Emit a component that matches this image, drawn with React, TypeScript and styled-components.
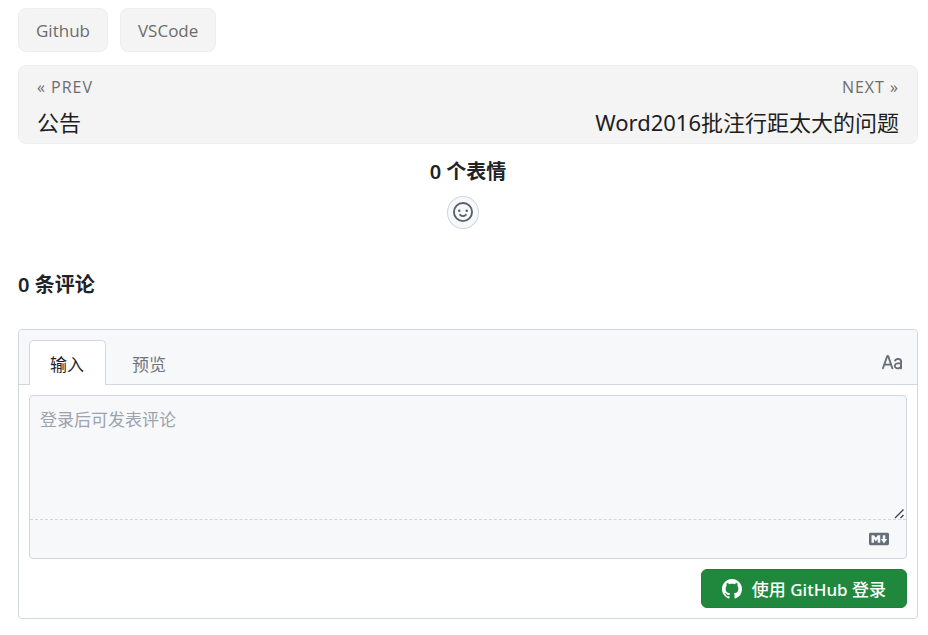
import React from "react";
import styled, { createGlobalStyle } from "styled-components";

const GlobalStyle = createGlobalStyle`
  *, *::before, *::after { box-sizing: border-box; }
  body {
    margin: 0;
    background: #fff;
    color: #1f2328;
    font-family: "Noto Sans", "Noto Sans CJK SC", sans-serif;
  }
  button, textarea { font: inherit; }
`;

const Page = styled.main`
  padding: 8px 10px 16px 18px;
`;

const TagList = styled.nav`
  display: flex;
  gap: 12px;
`;

const Tag = styled.a`
  height: 44px;
  padding: 0 17px;
  border: 1px solid #eee;
  border-radius: 8px;
  background: #f4f4f4;
  color: #6c6c6c;
  font-family: "Open Sans", sans-serif;
  font-size: 17px;
  line-height: 43px;
  text-decoration: none;
`;

const PostNav = styled.nav`
  display: flex;
  justify-content: space-between;
  margin-top: 13px;
  border: 1px solid #eee;
  border-radius: 8px;
  background: #f4f4f4;
`;

const PostLink = styled.a<{ $align: "left" | "right" }>`
  padding: 8px 18px 0;
  color: #1e1e1e;
  text-align: ${(p) => p.$align};
  text-decoration: none;
`;

const PostLabel = styled.span`
  display: block;
  color: #6c6c6c;
  font-family: "Open Sans", sans-serif;
  font-size: 16px;
  line-height: 26px;
  letter-spacing: 1px;
`;

const PostTitle = styled.span`
  display: block;
  padding-top: 1px;
  font-size: 22px;
  line-height: 42px;
`;

const Reactions = styled.section`
  display: flex;
  flex-direction: column;
  align-items: center;
`;

const Heading = styled.h2`
  margin: 0;
  font-size: 20px;
  font-weight: 600;
  line-height: 30px;
`;

const ReactionHeading = styled(Heading)`
  margin-top: 13px;
`;

const ReactionButton = styled.button`
  display: flex;
  align-items: center;
  justify-content: center;
  width: 32px;
  height: 33px;
  margin: 9px 10px 0 0;
  padding: 0 0 1px;
  border: 1px solid #d0d7de;
  border-radius: 50%;
  background: #f6f8fa;
  color: #57606a;
`;

const CommentHeading = styled(Heading)`
  margin-top: 41px;
`;

const Editor = styled.form`
  margin-top: 29px;
  border: 1px solid #d0d7de;
  border-radius: 4px;
`;

const EditorHeader = styled.div`
  display: flex;
  align-items: center;
  justify-content: space-between;
  height: 55px;
  padding: 10px 15px 0 10px;
  border-bottom: 1px solid #d0d7de;
  border-radius: 4px 4px 0 0;
  background: #f6f8fa;
`;

const Tabs = styled.div`
  display: flex;
  align-self: stretch;
  margin-bottom: -1px;
`;

const Tab = styled.button<{ $active?: boolean }>`
  padding: 1px 21px 0 20px;
  border: 1px solid ${(p) => (p.$active ? "#d0d7de" : "transparent")};
  border-bottom: 0;
  border-radius: 5px 5px 0 0;
  background: ${(p) => (p.$active ? "#fff" : "transparent")};
  color: ${(p) => (p.$active ? "#1f2328" : "#6e7781")};
  font-size: 17px;
  margin-right: 5px;
  white-space: nowrap;
`;

const IconButton = styled.button`
  display: flex;
  padding: 2px 0 0;
  border: 0;
  background: none;
  color: #656d76;
`;

const EditorBody = styled.div`
  padding: 10px;
`;

const InputFrame = styled.div`
  border: 1px solid #d0d7de;
  border-radius: 4px;
  background: #f6f8fa;
`;

const resizeGrip = `url("data:image/svg+xml,%3Csvg xmlns='http://www.w3.org/2000/svg' width='15' height='15'%3E%3Cpath d='M4 14l8.5-8.5M9.5 14l3-3' stroke='%23444' stroke-width='1.4' fill='none'/%3E%3C/svg%3E")`;

const CommentInput = styled.textarea`
  display: block;
  width: 100%;
  height: 124px;
  padding: 11px 10px;
  border: 0;
  border-bottom: 1px dashed #d0d7de;
  outline: 0;
  background: transparent;
  font-size: 17px;
  line-height: 26px;
  resize: vertical;
  &::placeholder { color: #9ca3af; opacity: 1; }
  &::-webkit-resizer { background: ${resizeGrip} right bottom no-repeat; }
`;

const InputFooter = styled.div`
  display: flex;
  align-items: center;
  justify-content: flex-end;
  height: 38px;
  padding: 0 17px;
`;

const MarkdownLink = styled.a`
  display: flex;
  color: #656d76;
`;

const Actions = styled.div`
  display: flex;
  justify-content: flex-end;
  margin-top: 10px;
`;

const LoginLink = styled.a`
  display: flex;
  align-items: center;
  gap: 10px;
  height: 39px;
  padding: 0 20px;
  border: 1px solid #1f7f3a;
  border-radius: 6px;
  background: #1f883d;
  color: #fff;
  font-size: 17px;
  font-weight: 500;
  text-decoration: none;
  white-space: nowrap;
`;

const paths = {
  smiley:
    "M8 0a8 8 0 1 1 0 16A8 8 0 0 1 8 0ZM1.5 8a6.5 6.5 0 1 0 13 0 6.5 6.5 0 0 0-13 0Zm3.82 1.636a.75.75 0 0 1 1.038.175l.007.009c.103.118.22.222.35.31.264.178.683.37 1.285.37.602 0 1.02-.192 1.285-.371.13-.088.247-.192.35-.31l.007-.008a.75.75 0 0 1 1.222.87l-.022-.015c.02.013.021.015.021.015v.001l-.001.002-.002.003-.005.007-.014.019a2.066 2.066 0 0 1-.184.213c-.16.166-.338.316-.53.445-.63.418-1.37.638-2.127.629-.946 0-1.652-.308-2.126-.63a3.331 3.331 0 0 1-.715-.657l-.014-.02-.005-.006-.002-.003v-.002h-.001l.613-.432-.614.43a.75.75 0 0 1 .183-1.044ZM12 7a1 1 0 1 1-2 0 1 1 0 0 1 2 0ZM5 8a1 1 0 1 1 0-2 1 1 0 0 1 0 2Zm5.25 2.25.592.416a97.71 97.71 0 0 0-.592-.416Z",
  typography:
    "M6.71 10H2.332l-.874 2.498a.75.75 0 0 1-1.415-.496l3.39-9.688a1.217 1.217 0 0 1 2.302.018l3.227 9.681a.75.75 0 0 1-1.423.474Zm3.13-4.358C10.53 4.374 11.87 4 13 4c1.5 0 3 .939 3 2.601v5.649a.75.75 0 0 1-1.448.275C13.995 12.82 13.3 13 12.5 13c-.77 0-1.514-.231-2.078-.709-.577-.488-.922-1.199-.922-2.041 0-.694.265-1.411.887-1.944C11 7.78 11.88 7.5 13 7.5h1.5v-.899c0-.54-.5-1.101-1.5-1.101-.869 0-1.528.282-1.84.858a.75.75 0 1 1-1.32-.716ZM6.21 8.5 4.574 3.594 2.857 8.5Zm8.29.5H13c-.881 0-1.375.22-1.637.444-.253.217-.363.5-.363.806 0 .408.155.697.39.896.249.21.63.354 1.11.354.732 0 1.26-.209 1.588-.449.35-.257.412-.495.412-.551Z",
  markdown:
    "M14.85 3c.63 0 1.15.52 1.14 1.15v7.7c0 .63-.51 1.15-1.15 1.15H1.15C.52 13 0 12.48 0 11.84V4.15C0 3.52.52 3 1.15 3ZM9 11V5H7L5.5 7 4 5H2v6h2V8l1.5 1.92L7 8v3Zm2.99.5L14.5 8H13V5h-2v3H9.5Z",
  github:
    "M8 0C3.58 0 0 3.58 0 8c0 3.54 2.29 6.53 5.47 7.59.4.07.55-.17.55-.38 0-.19-.01-.82-.01-1.49-2.01.37-2.53-.49-2.69-.94-.09-.23-.48-.94-.82-1.13-.28-.15-.68-.52-.01-.53.63-.01 1.08.58 1.23.82.72 1.21 1.87.87 2.33.66.07-.52.28-.87.51-1.07-1.78-.2-3.64-.89-3.64-3.95 0-.87.31-1.59.82-2.15-.08-.2-.36-1.02.08-2.12 0 0 .67-.21 2.2.82.64-.18 1.32-.27 2-.27s1.36.09 2 .27c1.53-1.04 2.2-.82 2.2-.82.44 1.1.16 1.92.08 2.12.51.56.82 1.27.82 2.15 0 3.07-1.87 3.75-3.65 3.95.29.25.54.73.54 1.48 0 1.07-.01 1.93-.01 2.2 0 .21.15.46.55.38A8.01 8.01 0 0 0 16 8c0-4.42-3.58-8-8-8Z",
};

function Icon({ name, size = 20 }: { name: keyof typeof paths; size?: number }) {
  return (
    <svg width={size} height={size} viewBox="0 0 16 16" fill="currentColor" aria-hidden="true">
      <path fillRule="evenodd" d={paths[name]} />
    </svg>
  );
}

export default function App() {
  return (
    <>
      <GlobalStyle />
      <Page>
        <TagList aria-label="标签">
          <Tag href="#github">Github</Tag>
          <Tag href="#vscode">VSCode</Tag>
        </TagList>
        <PostNav>
          <PostLink href="#prev" $align="left">
            <PostLabel>« PREV</PostLabel>
            <PostTitle>公告</PostTitle>
          </PostLink>
          <PostLink href="#next" $align="right">
            <PostLabel>NEXT »</PostLabel>
            <PostTitle>Word2016批注行距太大的问题</PostTitle>
          </PostLink>
        </PostNav>
        <Reactions>
          <ReactionHeading>0 个表情</ReactionHeading>
          <ReactionButton type="button" aria-label="添加表情">
            <Icon name="smiley" />
          </ReactionButton>
        </Reactions>
        <CommentHeading>0 条评论</CommentHeading>
        <Editor onSubmit={(e) => e.preventDefault()}>
          <EditorHeader>
            <Tabs role="tablist">
              <Tab type="button" role="tab" aria-selected $active>输入</Tab>
              <Tab type="button" role="tab" aria-selected={false}>预览</Tab>
            </Tabs>
            <IconButton type="button" aria-label="启用等宽字体">
              <Icon name="typography" />
            </IconButton>
          </EditorHeader>
          <EditorBody>
            <InputFrame>
              <CommentInput aria-label="评论" placeholder="登录后可发表评论" />
              <InputFooter>
                <MarkdownLink href="#markdown" aria-label="支持 Markdown 格式">
                  <Icon name="markdown" />
                </MarkdownLink>
              </InputFooter>
            </InputFrame>
            <Actions>
              <LoginLink href="#login">
                <Icon name="github" />
                使用 GitHub 登录
              </LoginLink>
            </Actions>
          </EditorBody>
        </Editor>
      </Page>
    </>
  );
}
